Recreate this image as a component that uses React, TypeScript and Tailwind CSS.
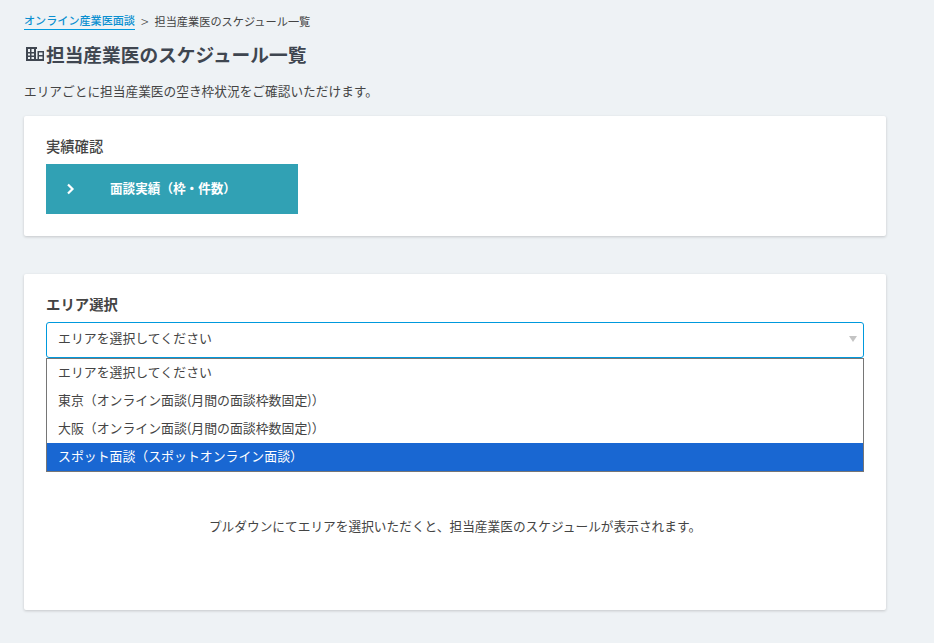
const font = { fontFamily: '"Noto Sans CJK JP", "Noto Sans", sans-serif' };

const options = [
  'エリアを選択してください',
  '東京（オンライン面談(月間の面談枠数固定)）',
  '大阪（オンライン面談(月間の面談枠数固定)）',
];

const CalendarIcon = () => (
  <svg width="21" height="16" viewBox="0 0 21 16" fill="#3f4650" className="shrink-0">
    <path d="M2 1h11v2H2z" />
    <path d="M2 3h2v11H2zM6 3h1.500v11H6zM10 3h2v11h-2zM13.500 5H20v9h-1.500V6.500h-3.500V14h-1.500z" />
    <path d="M2 6h10v1.500H2zM2 9.500h10V11H2zM2 13h18v2H2zM14 9h5v1.500h-5z" />
  </svg>
);

export default function App() {
  return (
    <div className="min-h-[643px] bg-[#eef2f5] pl-6 pr-12 pt-[11px] text-[#444]" style={font}>
      <div className="flex items-center text-[11.100px] leading-[18px]">
        <a className="border-b border-[#0099dd] font-medium text-[#0a8fd0]">オンライン産業医面談</a>
        <span className="ml-[6px] mr-[6px] text-[14px] font-light">&gt;</span>
        <span className="text-[11.200px]">担当産業医のスケジュール一覧</span>
      </div>

      <h1 className="mt-[11px] flex items-center text-[18.700px] font-bold leading-[26px] text-[#3f4650]">
        <CalendarIcon />
        <span className="ml-[1px]">担当産業医のスケジュール一覧</span>
      </h1>

      <p className="mt-[15px] text-[12.700px] leading-[18px]">
        エリアごとに担当産業医の空き枠状況をご確認いただけます。
      </p>

      <section className="mt-[16px] h-[120px] rounded-[2px] bg-white px-[22px] pt-[20px] shadow-[0_1px_3px_rgba(0,0,0,0.18)]">
        <h2 className="text-[14.300px] font-medium leading-[19px]">実績確認</h2>
        <button className="mt-[9px] flex h-[50px] w-[252px] items-center bg-[#31a1b4] pl-[20px] text-[12.600px] font-bold text-white">
          <svg width="10" height="12" viewBox="0 0 10 12" fill="none" stroke="white" strokeWidth="2.200">
            <path d="M2 1.500 6.500 6 2 10.500" />
          </svg>
          <span className="ml-[34px] pb-[2px]">面談実績（枠・件数）</span>
        </button>
      </section>

      <section className="mt-[38px] h-[336px] rounded-[2px] bg-white px-[22px] pt-[20px] shadow-[0_1px_3px_rgba(0,0,0,0.18)]">
        <h2 className="text-[14.400px] font-bold leading-[19px]">エリア選択</h2>

        <div className="relative mt-[9px] flex h-[36px] items-center justify-between rounded-[3px] border border-[#0099dd] pl-[11px] pr-[6px] text-[12.900px]">
          <span className="pb-[5px]">エリアを選択してください</span>
          <span className="mb-[2px] h-0 w-0 border-x-[4.500px] border-t-[6px] border-x-transparent border-t-[#c4c4c4]" />
          <ul className="absolute -left-px -right-px top-[35px] border border-[#767676] bg-white leading-[25px]">
            {options.map((o) => (
              <li key={o} className="h-[28px] pl-[11px]">
                {o}
              </li>
            ))}
            <li className="h-[28px] bg-[#1967d2] pl-[11px] text-white">スポット面談（スポットオンライン面談）</li>
          </ul>
        </div>

        <p className="mt-[158px] text-center text-[12.700px] leading-[20px]">
          プルダウンにてエリアを選択いただくと、担当産業医のスケジュールが表示されます。
        </p>
      </section>
    </div>
  );
}
